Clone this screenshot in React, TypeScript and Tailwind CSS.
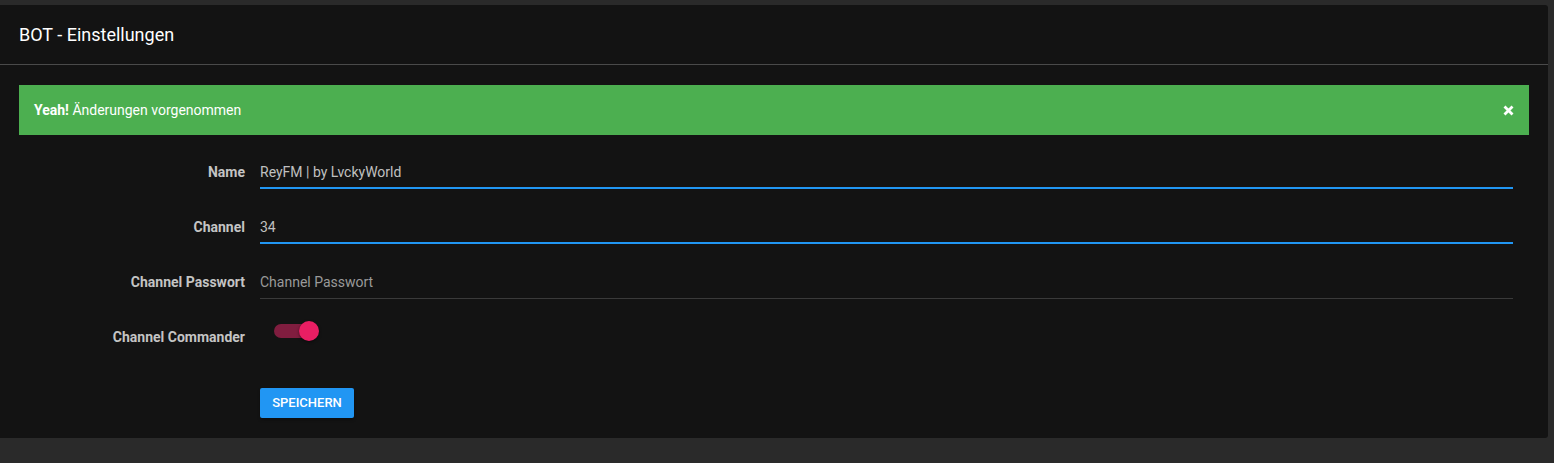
import React from "react";

export default function App() {
  const rows = [
    { label: "Name", value: "ReyFM | by LvckyWorld", active: true },
    { label: "Channel", value: "34", active: true },
    { label: "Channel Passwort", value: "", placeholder: "Channel Passwort", active: false },
  ];
  return (
    <div
      className="w-[1554px] h-[463px] bg-[#2a2a2a] pt-[5px] overflow-hidden"
      style={{ fontFamily: "Roboto, 'Liberation Sans', sans-serif" }}
    >
      <div className="w-[1548px] bg-[#131313] rounded-r-[3px] rounded-l-none">
        <div className="h-[60px] flex items-center px-[19px] border-b border-[#4a4a4a]">
          <h1 className="text-[18px] text-white font-normal">BOT - Einstellungen</h1>
        </div>
        <div className="px-[19px] pt-[20px] pb-[20px]">
          <div className="h-[50px] bg-[#4caf50] flex items-center justify-between pl-[15px] pr-[15px] text-[14px] text-white">
            <div>
              <span className="font-bold">Yeah!</span> Änderungen vorgenommen
            </div>
            <svg width="11" height="11" viewBox="0 0 11 11">
              <path d="M1.5 1.5 L9.5 9.5 M9.5 1.5 L1.5 9.5" stroke="white" strokeWidth="2.8" strokeLinecap="butt" />
            </svg>
          </div>
          <div className="pt-[20px]">
            {rows.map((r) => (
              <div key={r.label} className="flex items-center h-[34px] mb-[21px]">
                <div className="w-[226px] text-right text-[14px] font-bold text-[#c4c4c4]">{r.label}</div>
                <div
                  className={
                    "ml-[15px] w-[1253px] h-[34px] flex items-center text-[14px] " +
                    (r.active ? "border-b-2 border-[#2196f3] pt-[2px]" : "border-b border-[#3a3a3a] pt-[1px]")
                  }
                >
                  {r.value ? (
                    <span className="text-[#c0c0c0]">{r.value}</span>
                  ) : (
                    <span className="text-[#9a9a9a]">{r.placeholder}</span>
                  )}
                </div>
              </div>
            ))}
            <div className="flex items-center h-[34px]">
              <div className="w-[226px] text-right text-[14px] font-bold text-[#c4c4c4]">Channel Commander</div>
              <div className="ml-[15px] h-[34px] flex items-start">
                <div className="relative ml-[14px] mt-[4px] w-[34px] h-[14px] rounded-full bg-[#801d3f]">
                  <div className="absolute right-[-11px] top-[-3px] w-[20px] h-[20px] rounded-full bg-[#e91e63] shadow-[0_1px_3px_rgba(0,0,0,0.5)]" />
                </div>
              </div>
            </div>
            <div className="pl-[241px] pt-[34px]">
              <button className="h-[30px] w-[94px] bg-[#2196f3] text-white text-[13px] font-medium rounded-[2px] shadow-[0_2px_3px_rgba(0,0,0,0.3)] uppercase">
                Speichern
              </button>
            </div>
          </div>
        </div>
      </div>
    </div>
  );
}
